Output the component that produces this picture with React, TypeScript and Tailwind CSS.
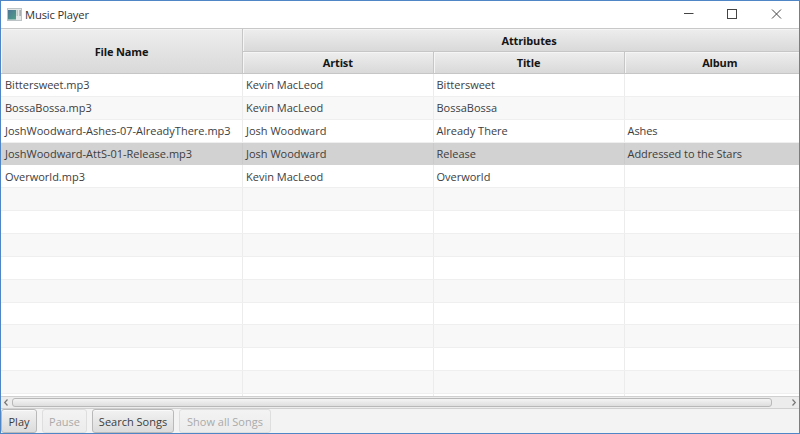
import React from "react";

type Song = { file: string; artist: string; title: string; album: string };

const songs: Song[] = [
  { file: "Bittersweet.mp3", artist: "Kevin MacLeod", title: "Bittersweet", album: "" },
  { file: "BossaBossa.mp3", artist: "Kevin MacLeod", title: "BossaBossa", album: "" },
  { file: "JoshWoodward-Ashes-07-AlreadyThere.mp3", artist: "Josh Woodward", title: "Already There", album: "Ashes" },
  { file: "JoshWoodward-AttS-01-Release.mp3", artist: "Josh Woodward", title: "Release", album: "Addressed to the Stars" },
  { file: "Overworld.mp3", artist: "Kevin MacLeod", title: "Overworld", album: "" },
];

const ROW_COUNT = 15;
const SELECTED = 3;

const headerCell =
  "flex items-center justify-center bg-linear-to-b from-[#eeeeee] to-[#d9d9d9] font-bold text-[#151515] shadow-[inset_1px_1px_0_#f5f5f5]";

function TitleBar() {
  return (
    <div className="flex h-[27px] shrink-0 items-center bg-white pl-[6px] text-[#333]">
      <svg width="16" height="13" viewBox="0 0 16 13" className="mr-[2px]">
        <defs>
          <linearGradient id="screen" x1="0" y1="0" x2="1" y2="1">
            <stop offset="0" stopColor="#4c7494" />
            <stop offset="1" stopColor="#4fa187" />
          </linearGradient>
        </defs>
        <rect x="0.5" y="0.5" width="14" height="12" fill="#e2e6e7" stroke="#bcc3c6" />
        <rect x="1" y="2" width="8" height="9.5" fill="url(#screen)" />
        <rect x="9.5" y="2" width="1.5" height="6" fill="#b5cbbd" />
        <rect x="12.5" y="2" width="1.2" height="6" fill="#8f989b" />
      </svg>
      <span className="grow text-[11.2px] tracking-[-0.14px]">Music Player</span>
      <svg width="116" height="27" viewBox="0 0 116 27" fill="none" stroke="#444" strokeWidth="1">
        <path d="M1 12.5h9.5" />
        <rect x="44.5" y="8.5" width="9" height="9" />
        <path d="M89 8.5l9 9M98 8.5l-9 9" />
      </svg>
    </div>
  );
}

function TableHeader() {
  return (
    <div className="h-[46px] shrink-0 overflow-hidden">
      <div className="grid h-[46px] w-[814px] grid-cols-[242px_190.5px_191px_190.5px] grid-rows-[23px_22px] border-t border-[#c8c8c8] text-[11px] tracking-[-0.15px]">
        <div className={`${headerCell} row-span-2 border-r border-b border-[#c6c6c6]`}>File Name</div>
        <div className={`${headerCell} col-span-3 border-b border-[#c6c6c6]`}>Attributes</div>
        <div className={`${headerCell} border-r border-b border-[#c6c6c6]`}>Artist</div>
        <div className={`${headerCell} border-r border-b border-[#c6c6c6]`}>Title</div>
        <div className={`${headerCell} border-b border-[#c6c6c6]`}>Album</div>
      </div>
    </div>
  );
}

function Row({ index }: { index: number }) {
  const song = songs[index];
  const selected = index === SELECTED;
  const fill = selected ? "bg-[#d2d2d2]" : index % 2 ? "bg-[#f8f8f8]" : "bg-white";
  const cell = `flex items-center whitespace-nowrap pl-[3px] ${
    selected ? "border-[#cacaca]" : "border-[#ececec]"
  }`;
  return (
    <div
      className={`grid h-[22.87px] shrink-0 grid-cols-[242px_190.5px_191px_1fr] border-b ${fill} ${
        selected ? "border-[#d2d2d2]" : "border-[#efefef]"
      }`}
    >
      <div className={`${cell} border-r pl-[4px]`}>{song?.file}</div>
      <div className={`${cell} border-r`}>{song?.artist}</div>
      <div className={`${cell} border-r`}>{song?.title}</div>
      <div className={`${cell} tracking-[-0.08px]`}>{song?.album}</div>
    </div>
  );
}

function ScrollBar() {
  return (
    <div className="flex h-[13px] shrink-0 items-center border-y border-[#d0d0d0] bg-[#ececec]">
      <svg width="11" height="11" viewBox="0 0 11 11" fill="none" stroke="#777" strokeWidth="1.2">
        <path d="M6.5 2.5L3.7 5.5L6.5 8.5" />
      </svg>
      <div className="h-[9px] w-[760px] rounded-[3px] border border-[#b8b8b8] bg-linear-to-b from-[#f4f4f4] to-[#dedede]" />
      <div className="grow" />
      <svg width="9" height="11" viewBox="0 0 9 11" fill="none" stroke="#777" strokeWidth="1.2">
        <path d="M2.5 2.5L5.3 5.5L2.5 8.5" />
      </svg>
    </div>
  );
}

function ToolButton({ label, width, disabled }: { label: string; width: string; disabled?: boolean }) {
  return (
    <button
      disabled={disabled}
      className={`flex h-[24px] items-center justify-center rounded-[3px] border bg-linear-to-b whitespace-nowrap ${width} ${
        disabled
          ? "border-[#dedede] from-[#f3f3f3] to-[#ececec] text-[#aaaaaa]"
          : "border-[#b9b9b9] from-[#f2f2f2] to-[#dcdcdc] text-[#3c3c3c] shadow-[inset_0_1px_0_#fafafa]"
      }`}
    >
      {label}
    </button>
  );
}

export default function App() {
  return (
    <div className="flex h-[434px] w-[800px] flex-col overflow-hidden border border-[#4f86c6] bg-[#f3f3f3] font-['Open_Sans','Noto_Sans',sans-serif] text-[11px] leading-none text-[#3d3d3d]">
      <TitleBar />
      <TableHeader />
      <div className="flex h-[322px] shrink-0 flex-col overflow-hidden">
        {Array.from({ length: ROW_COUNT }, (_, i) => (
          <Row key={i} index={i} />
        ))}
      </div>
      <ScrollBar />
      <div className="flex gap-[5px]">
        <ToolButton label="Play" width="w-[36px]" />
        <ToolButton label="Pause" width="w-[45px]" disabled />
        <ToolButton label="Search Songs" width="w-[82px]" />
        <ToolButton label="Show all Songs" width="w-[92px]" disabled />
      </div>
    </div>
  );
}
